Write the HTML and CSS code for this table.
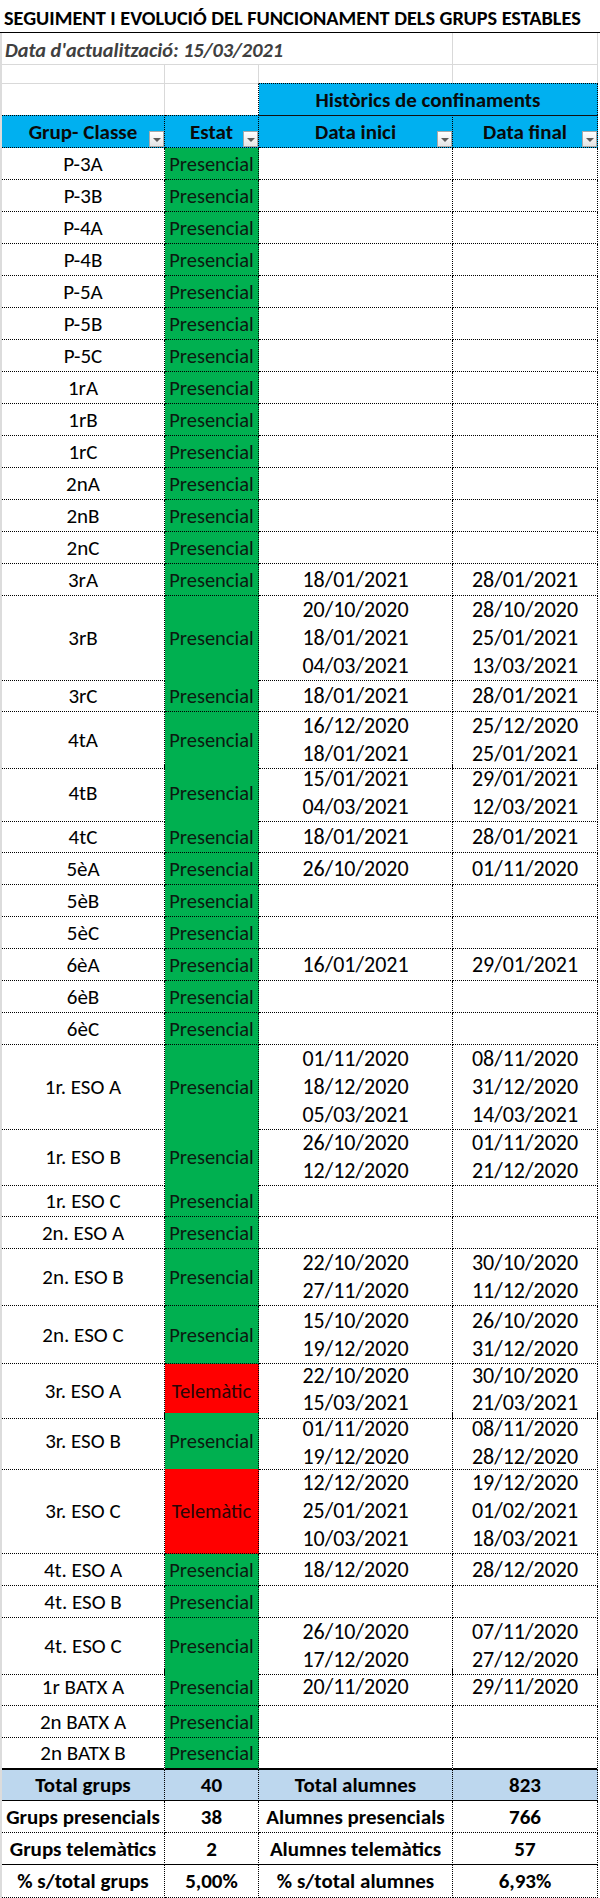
FILE: index.html
```html
<!DOCTYPE html>
<html lang="ca">
<head>
<meta charset="utf-8">
<title>Seguiment grups estables</title>
<link rel="stylesheet" href="styles.css">
</head>
<body>
<div class="sheet">
  <div class="title">SEGUIMENT I EVOLUCIÓ DEL FUNCIONAMENT DELS GRUPS ESTABLES</div>

  <div class="row meta">
    <div class="c span3 updated">Data d'actualització: 15/03/2021</div>
    <div class="c"></div>
  </div>

  <div class="row spacer">
    <div class="c"></div><div class="c"></div><div class="c"></div><div class="c"></div>
  </div>

  <div class="row group">
    <div class="c"></div>
    <div class="c"></div>
    <div class="c span2 hist">Històrics de confinaments</div>
  </div>

  <div class="row head">
    <div class="c">Grup- Classe<span class="filter"></span></div>
    <div class="c">Estat<span class="filter"></span></div>
    <div class="c dark">Data inici<span class="filter"></span></div>
    <div class="c dark">Data final<span class="filter"></span></div>
  </div>

  <div class="row data"><div class="c">P-3A</div><div class="c on">Presencial</div><div class="c"></div><div class="c"></div></div>
  <div class="row data"><div class="c">P-3B</div><div class="c on">Presencial</div><div class="c"></div><div class="c"></div></div>
  <div class="row data"><div class="c">P-4A</div><div class="c on">Presencial</div><div class="c"></div><div class="c"></div></div>
  <div class="row data"><div class="c">P-4B</div><div class="c on">Presencial</div><div class="c"></div><div class="c"></div></div>
  <div class="row data"><div class="c">P-5A</div><div class="c on">Presencial</div><div class="c"></div><div class="c"></div></div>
  <div class="row data"><div class="c">P-5B</div><div class="c on">Presencial</div><div class="c"></div><div class="c"></div></div>
  <div class="row data"><div class="c">P-5C</div><div class="c on">Presencial</div><div class="c"></div><div class="c"></div></div>
  <div class="row data"><div class="c">1rA</div><div class="c on">Presencial</div><div class="c"></div><div class="c"></div></div>
  <div class="row data"><div class="c">1rB</div><div class="c on">Presencial</div><div class="c"></div><div class="c"></div></div>
  <div class="row data"><div class="c">1rC</div><div class="c on">Presencial</div><div class="c"></div><div class="c"></div></div>
  <div class="row data"><div class="c">2nA</div><div class="c on">Presencial</div><div class="c"></div><div class="c"></div></div>
  <div class="row data"><div class="c">2nB</div><div class="c on">Presencial</div><div class="c"></div><div class="c"></div></div>
  <div class="row data"><div class="c">2nC</div><div class="c on">Presencial</div><div class="c"></div><div class="c"></div></div>
  <div class="row data"><div class="c">3rA</div><div class="c on">Presencial</div><div class="c dates"><span>18/01/2021</span></div><div class="c dates"><span>28/01/2021</span></div></div>
  <div class="row data h84"><div class="c">3rB</div><div class="c on">Presencial</div><div class="c dates"><span>20/10/2020</span><span>18/01/2021</span><span>04/03/2021</span></div><div class="c dates"><span>28/10/2020</span><span>25/01/2021</span><span>13/03/2021</span></div></div>
  <div class="row data"><div class="c">3rC</div><div class="c on">Presencial</div><div class="c dates"><span>18/01/2021</span></div><div class="c dates"><span>28/01/2021</span></div></div>
  <div class="row data h53"><div class="c">4tA</div><div class="c on">Presencial</div><div class="c dates"><span>16/12/2020</span><span>18/01/2021</span></div><div class="c dates"><span>25/12/2020</span><span>25/01/2021</span></div></div>
  <div class="row data h56"><div class="c">4tB</div><div class="c on">Presencial</div><div class="c dates"><span>15/01/2021</span><span>04/03/2021</span></div><div class="c dates"><span>29/01/2021</span><span>12/03/2021</span></div></div>
  <div class="row data"><div class="c">4tC</div><div class="c on">Presencial</div><div class="c dates"><span>18/01/2021</span></div><div class="c dates"><span>28/01/2021</span></div></div>
  <div class="row data"><div class="c">5èA</div><div class="c on">Presencial</div><div class="c dates"><span>26/10/2020</span></div><div class="c dates"><span>01/11/2020</span></div></div>
  <div class="row data"><div class="c">5èB</div><div class="c on">Presencial</div><div class="c"></div><div class="c"></div></div>
  <div class="row data"><div class="c">5èC</div><div class="c on">Presencial</div><div class="c"></div><div class="c"></div></div>
  <div class="row data"><div class="c">6èA</div><div class="c on">Presencial</div><div class="c dates"><span>16/01/2021</span></div><div class="c dates"><span>29/01/2021</span></div></div>
  <div class="row data"><div class="c">6èB</div><div class="c on">Presencial</div><div class="c"></div><div class="c"></div></div>
  <div class="row data"><div class="c">6èC</div><div class="c on">Presencial</div><div class="c"></div><div class="c"></div></div>
  <div class="row data h84"><div class="c">1r. ESO A</div><div class="c on">Presencial</div><div class="c dates"><span>01/11/2020</span><span>18/12/2020</span><span>05/03/2021</span></div><div class="c dates"><span>08/11/2020</span><span>31/12/2020</span><span>14/03/2021</span></div></div>
  <div class="row data h56"><div class="c">1r. ESO B</div><div class="c on">Presencial</div><div class="c dates"><span>26/10/2020</span><span>12/12/2020</span></div><div class="c dates"><span>01/11/2020</span><span>21/12/2020</span></div></div>
  <div class="row data"><div class="c">1r. ESO C</div><div class="c on">Presencial</div><div class="c"></div><div class="c"></div></div>
  <div class="row data"><div class="c">2n. ESO A</div><div class="c on">Presencial</div><div class="c"></div><div class="c"></div></div>
  <div class="row data h57"><div class="c">2n. ESO B</div><div class="c on">Presencial</div><div class="c dates"><span>22/10/2020</span><span>27/11/2020</span></div><div class="c dates"><span>30/10/2020</span><span>11/12/2020</span></div></div>
  <div class="row data h58"><div class="c">2n. ESO C</div><div class="c on">Presencial</div><div class="c dates"><span>15/10/2020</span><span>19/12/2020</span></div><div class="c dates"><span>26/10/2020</span><span>31/12/2020</span></div></div>
  <div class="row data h49"><div class="c">3r. ESO A</div><div class="c off">Telemàtic</div><div class="c dates tight"><span>22/10/2020</span><span>15/03/2021</span></div><div class="c dates tight"><span>30/10/2020</span><span>21/03/2021</span></div></div>
  <div class="row data h56"><div class="c">3r. ESO B</div><div class="c on">Presencial</div><div class="c dates low"><span>01/11/2020</span><span>19/12/2020</span></div><div class="c dates low"><span>08/11/2020</span><span>28/12/2020</span></div></div>
  <div class="row data h85"><div class="c">3r. ESO C</div><div class="c off">Telemàtic</div><div class="c dates"><span>12/12/2020</span><span>25/01/2021</span><span>10/03/2021</span></div><div class="c dates"><span>19/12/2020</span><span>01/02/2021</span><span>18/03/2021</span></div></div>
  <div class="row data"><div class="c">4t. ESO A</div><div class="c on">Presencial</div><div class="c dates"><span>18/12/2020</span></div><div class="c dates"><span>28/12/2020</span></div></div>
  <div class="row data"><div class="c">4t. ESO B</div><div class="c on">Presencial</div><div class="c"></div><div class="c"></div></div>
  <div class="row data h51"><div class="c">4t. ESO C</div><div class="c on">Presencial</div><div class="c dates"><span>26/10/2020</span><span>17/12/2020</span></div><div class="c dates"><span>07/11/2020</span><span>27/12/2020</span></div></div>
  <div class="row data h37"><div class="c">1r BATX A</div><div class="c on">Presencial</div><div class="c dates"><span>20/11/2020</span></div><div class="c dates"><span>29/11/2020</span></div></div>
  <div class="row data"><div class="c">2n BATX A</div><div class="c on">Presencial</div><div class="c"></div><div class="c"></div></div>
  <div class="row data last"><div class="c">2n BATX B</div><div class="c on">Presencial</div><div class="c"></div><div class="c"></div></div>

  <div class="row sum total"><div class="c">Total grups</div><div class="c">40</div><div class="c">Total alumnes</div><div class="c">823</div></div>
  <div class="row sum dotline"><div class="c">Grups presencials</div><div class="c">38</div><div class="c">Alumnes presencials</div><div class="c">766</div></div>
  <div class="row sum solidline"><div class="c">Grups telemàtics</div><div class="c">2</div><div class="c">Alumnes telemàtics</div><div class="c">57</div></div>
  <div class="row sum dotline end"><div class="c">% s/total grups</div><div class="c">5,00%</div><div class="c">% s/total alumnes</div><div class="c">6,93%</div></div>
</div>
</body>
</html>
```

FILE: styles.css
```css
* {
  box-sizing: border-box;
  margin: 0;
  padding: 0;
}

html, body {
  background: #ffffff;
}

body {
  width: 600px;
  height: 1898px;
  overflow: hidden;
  font-family: Calibri, Carlito, Lato, "Open Sans", sans-serif;
  font-size: 21px;
  color: #000;
}

.sheet {
  display: flex;
  flex-direction: column;
  width: 600px;
}

.title {
  height: 33px;
  line-height: 32px;
  padding: 2px 0 0 4px;
  font-size: 20.3px;
  font-weight: 700;
  border-bottom: 1px solid #000;
  white-space: nowrap;
}

.row {
  display: grid;
  grid-template-columns: 163px 94px 194px 145px;
  width: 598px;
  border-left: 2px solid #dcdcdc;
}

.c {
  position: relative;
  display: flex;
  align-items: center;
  justify-content: center;
  white-space: nowrap;
  border-right: 1px dotted #000;
}

.span2 { grid-column: span 2; }
.span3 { grid-column: span 3; }

/* top rows: plain worksheet gridlines */
.meta { height: 32px; }
.meta .c {
  border-right: 1px solid #d9d9d9;
  border-bottom: 1px solid #d9d9d9;
}
.updated {
  justify-content: flex-start;
  padding: 3px 0 0 3px;
  font-size: 20.3px;
  font-style: italic;
  font-weight: 700;
  color: #404040;
}

.spacer { height: 18px; }
.spacer .c { border-right: 1px solid #d9d9d9; }

.group { height: 32px; }
.group .c {
  border-top: 1px solid #d9d9d9;
  border-right: 1px solid #d9d9d9;
}
.group .c:nth-child(2) { border-right: 1px dotted #000; }
.group .hist {
  background: #00b0f0;
  border-top: 1px dotted #000;
  border-right: 1px dotted #000;
  font-weight: 700;
  color: #0a0a0a;
}

/* header with filter buttons */
.head { height: 33px; }
.head .c {
  background: #00b0f0;
  font-weight: 700;
  color: #0a0a0a;
  border-top: 1px dotted #000;
  border-bottom: 1px dotted #000;
}
.head .dark { border-top: 1px solid #111; }

.filter {
  position: absolute;
  right: 0;
  bottom: 0;
  width: 15px;
  height: 16px;
  border: 1px solid #a9a9a9;
  background: linear-gradient(#ffffff, #e4e4e4);
}
.filter::after {
  content: "";
  position: absolute;
  left: 3px;
  top: 6px;
  border-left: 4px solid transparent;
  border-right: 4px solid transparent;
  border-top: 4px solid #5a5a5a;
}

/* data rows */
.data { height: 32px; }
.data .c { border-bottom: 1px dotted #000; }
.data.h37 { height: 37px; }
.data.h49 { height: 49px; }
.data.h51 { height: 51px; }
.data.h53 { height: 53px; }
.data.h56 { height: 56px; }
.data.h57 { height: 57px; }
.data.h58 { height: 58px; }
.data.h84 { height: 84px; }
.data.h85 { height: 85px; }
.data.last .c { border-bottom: 2px solid #000; }

.on {
  background: #00b050;
  color: #0c1a10;
  font-size: 20.5px;
}
.off {
  background: #ff0000;
  color: #2a0505;
  font-size: 20.5px;
}

.dates {
  flex-direction: column;
  font-size: 22px;
  line-height: 28px;
}
.dates.tight {
  line-height: 24px;
  gap: 3px;
  padding-bottom: 3px;
}
.dates.low {
  line-height: 24px;
  gap: 4px;
  padding-top: 4px;
}

/* summary rows */
.sum {
  height: 32px;
  font-weight: 700;
}
.sum.total { height: 31px; }
.sum.total .c {
  background: #bdd7ee;
  border-bottom: 1px solid #000;
}
.sum.dotline .c { border-bottom: 1px dotted #000; }
.sum.solidline .c { border-bottom: 1px solid #000; }
.sum.end { height: 33px; }
```
